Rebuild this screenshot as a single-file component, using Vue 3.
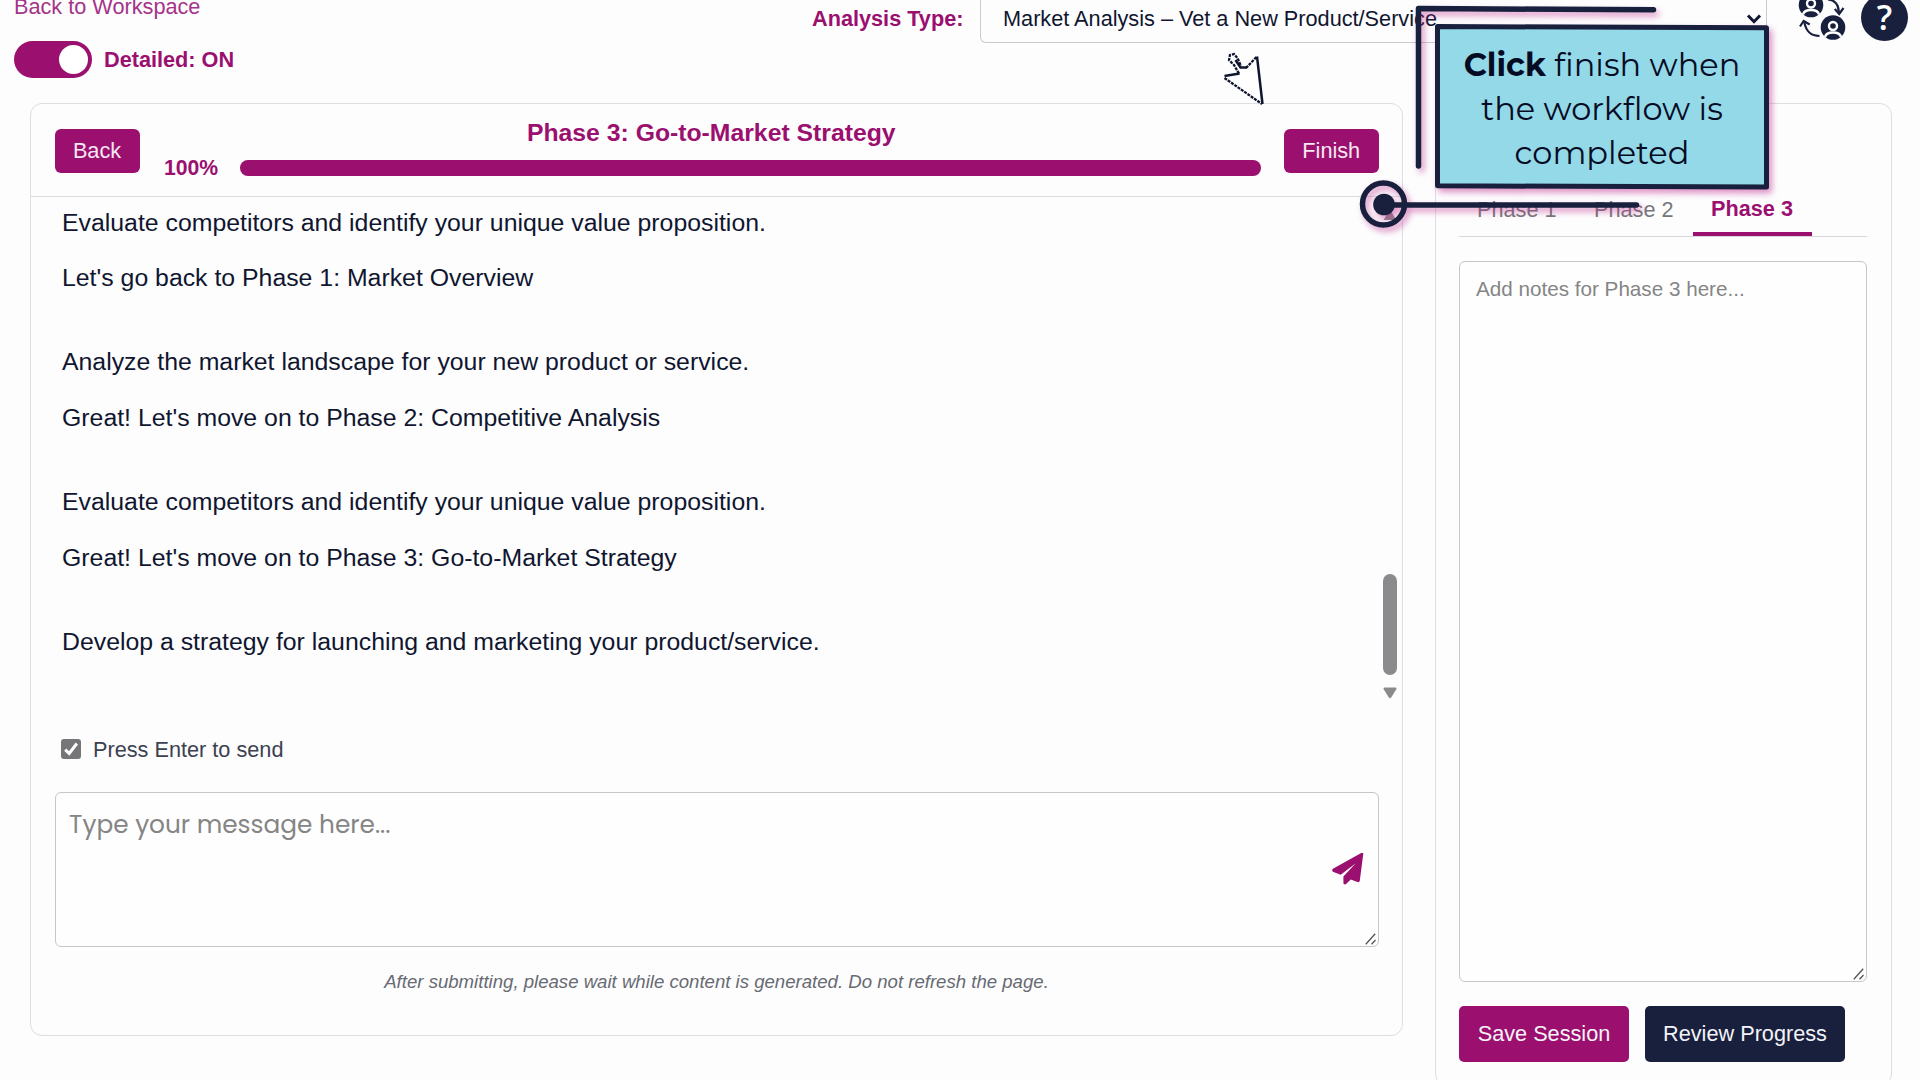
<script setup>
const messages = [
  { text: 'Evaluate competitors and identify your unique value proposition.', last: false },
  { text: "Let's go back to Phase 1: Market Overview", last: true },
  { text: 'Analyze the market landscape for your new product or service.', last: false },
  { text: "Great! Let's move on to Phase 2: Competitive Analysis", last: true },
  { text: 'Evaluate competitors and identify your unique value proposition.', last: false },
  { text: "Great! Let's move on to Phase 3: Go-to-Market Strategy", last: true },
  { text: 'Develop a strategy for launching and marketing your product/service.', last: false },
]
const tabs = ['Phase 1', 'Phase 2', 'Phase 3']
const activeTab = 'Phase 3'
const progress = 100
</script>

<template>
  <div class="page">
    <header class="topbar">
      <div class="workspace">
        <a class="back-link">Back to Workspace</a>
        <div class="toggle-row">
          <span class="toggle"><span class="knob"></span></span>
          <span class="toggle-label">Detailed: ON</span>
        </div>
      </div>
      <div class="analysis">
        <label class="analysis-label">Analysis Type:</label>
        <div class="select">
          <span>Market Analysis – Vet a New Product/Service</span>
          <svg class="chevron" width="16" height="12" viewBox="0 0 16 12"><path d="M2 2.500 8 8.700l6-6.200" fill="none" stroke="#10162f" stroke-width="3" /></svg>
        </div>
      </div>
      <div class="tools">
        <svg width="50" height="49" viewBox="0 0 50 49">
          <g fill="none" stroke="#18203e" stroke-width="2.200">
            <path d="M30 5.500c7 .5 10.500 5 11 13" />
            <path d="M36.800 15l4.400 5 4.300-6" />
            <path d="M21.500 42C12 41.800 8 37 6.300 28" />
            <path d="M2 32.500l3.700-5.500 6 3.500" />
          </g>
          <g v-for="c in [[13, 11], [35, 33.500]]" :key="c[0]" :transform="`translate(${c[0]} ${c[1]})`">
            <circle r="12.300" fill="#18203e" />
            <circle cy="-1.500" r="4" fill="#18203e" stroke="#fff" stroke-width="2.400" />
            <path d="M-8 9.500C-6.500 3.500 6.500 3.500 8 9.500" fill="none" stroke="#fff" stroke-width="2.400" />
          </g>
        </svg>
        <span class="help">?</span>
      </div>
    </header>

    <main class="content">
      <section class="card chat">
        <div class="chat-head">
          <button class="btn">Back</button>
          <div class="phase">
            <h2>Phase 3: Go-to-Market Strategy</h2>
            <div class="progress">
              <span class="percent">{{ progress }}%</span>
              <div class="track"><div class="fill" :style="{ width: progress + '%' }"></div></div>
            </div>
          </div>
          <button class="btn finish">Finish</button>
        </div>

        <div class="messages">
          <p v-for="(m, i) in messages" :key="i" :class="{ last: m.last }">{{ m.text }}</p>
          <span class="thumb"></span>
          <svg class="arrow up" width="14" height="12" viewBox="0 0 14 12"><path d="M7 1 13.500 11h-13z" fill="#8b8b8d" /></svg>
          <svg class="arrow down" width="14" height="12" viewBox="0 0 14 12"><path d="M1.500.5h11q1.500.3.8 1.800L8.200 10.500q-1.200 1.500-2.400 0L.7 2.300Q0 .8 1.500.5z" fill="#8b8b8d" /></svg>
        </div>

        <div class="enter-row">
          <span class="checkbox">
            <svg width="20" height="20" viewBox="0 0 20 20"><path d="M4.200 10.600l4 3.900 7.600-10" fill="none" stroke="#fff" stroke-width="3" /></svg>
          </span>
          <span class="enter-label">Press Enter to send</span>
        </div>

        <div class="composer">
          <textarea placeholder="Type your message here..."></textarea>
          <svg class="send" width="32" height="32" viewBox="0 0 32 32">
            <path d="M31.300.8 27.800 27.500c-.2 1.500-1.300 2-2.400 1.600l-6.600-2.500-4.700 4.500c-1.300 1-2.700.2-2.700-1.300v-6.200L23.500 10.500 8.700 21.800 1.500 19c-1.700-.8-1.700-2.700-.2-3.600L28.800.2c1.400-.8 2.800-.2 2.500.6z" fill="#9b0f6f" />
          </svg>
          <svg class="grip" width="12" height="12" viewBox="0 0 12 12"><path d="M.8 11.200 10.200.8M6.500 11.200 10.500 7" stroke="#555" stroke-width="1.300" /></svg>
        </div>
        <p class="hint">After submitting, please wait while content is generated. Do not refresh the page.</p>
      </section>

      <aside class="card notes">
        <nav class="tabs">
          <span v-for="t in tabs" :key="t" class="tab" :class="{ active: t === activeTab }">{{ t }}</span>
        </nav>
        <div class="notes-box">
          <textarea placeholder="Add notes for Phase 3 here..."></textarea>
          <svg class="grip" width="12" height="12" viewBox="0 0 12 12"><path d="M.8 11.200 10.200.8M6.500 11.200 10.500 7" stroke="#555" stroke-width="1.300" /></svg>
        </div>
        <div class="actions">
          <button class="action save">Save Session</button>
          <button class="action review">Review Progress</button>
        </div>
      </aside>
    </main>

    <svg class="cursor" width="42" height="56" viewBox="0 0 42 56">
      <path d="M39 52 33.500 4 28 11.500 24 16h-5L16.500 12 13 6.500 10.500 3H7L5.500 6 8 11.500 11.500 17l2 5L2 25.500z" fill="#fff" stroke="none" />
      <path d="M39.500 52 34 4.500M1.500 24 16.500 21.500M12.500 8 17.500 15.500h6.500" fill="none" stroke="#10162f" stroke-width="2.500" />
      <path d="M1.500 26 39 52M16 21.500 11 13 6 8 7 3l4-1 3.500 4L18 14M23 16 34 4.500" fill="none" stroke="#10162f" stroke-width="2.300" stroke-dasharray="3 1" />
    </svg>

    <div class="callout">
      <svg class="lines" width="420" height="240" viewBox="0 0 420 240">
        <g fill="none" stroke="#18203e" stroke-linecap="round" stroke-linejoin="round">
          <path d="M58.500 166V8.500L293.500 9.800" stroke-width="5.500" />
          <path d="M33 205H276.500" stroke-width="5.500" />
          <circle cx="23.500" cy="204" r="21" stroke-width="5.500" />
        </g>
        <circle cx="24" cy="204.500" r="10.800" fill="#18203e" />
        <path d="M77.500 26.500 406.500 27.800 406.500 187 77.500 185.800z" fill="#94d9e8" stroke="#18203e" stroke-width="5" stroke-linejoin="round" />
      </svg>
      <div class="callout-text">
        <div><b>Click</b> finish when</div>
        <div>the workflow is</div>
        <div>completed</div>
      </div>
    </div>
  </div>
</template>

<style>
body {
  margin: 0;
  background: #fdfdfe;
}
</style>

<style scoped>
* {
  box-sizing: border-box;
}

.page {
  position: relative;
  width: 1920px;
  height: 1080px;
  overflow: hidden;
  background: #fdfdfe;
  font-family: "Liberation Sans", Arial, sans-serif;
  font-size: 21.7px;
  color: #10162f;
  display: flex;
  flex-direction: column;
}

.topbar {
  display: flex;
  height: 109px;
  margin-top: -6px;
  flex: none;
}

.workspace {
  width: 812px;
  padding-left: 14px;
}

.back-link {
  display: block;
  line-height: 26px;
  color: #a53387;
}

.toggle-row {
  display: flex;
  align-items: center;
  gap: 12px;
  margin-top: 21px;
}

.toggle {
  width: 78px;
  height: 37px;
  border-radius: 19px;
  background: #9b0f6f;
  display: flex;
  align-items: center;
  justify-content: flex-end;
  padding-right: 4px;
}

.knob {
  width: 29px;
  height: 29px;
  border-radius: 50%;
  background: #fff;
}

.toggle-label,
.analysis-label,
.percent {
  font-weight: 700;
  color: #9b0f6f;
}

.analysis {
  display: flex;
  align-items: center;
  width: 955px;
  height: 49px;
}

.analysis-label {
  width: 168px;
}

.select {
  flex: 1;
  height: 49px;
  border: 1.5px solid #c9c9cf;
  border-top: 0;
  border-radius: 0 0 6px 6px;
  display: flex;
  align-items: center;
  justify-content: space-between;
  padding: 1px 4px 0 22px;
}

.tools {
  display: flex;
  align-items: flex-start;
  margin-left: 31px;
}

.help {
  width: 47px;
  height: 47px;
  margin-left: 13px;
  border-radius: 50%;
  background: #18203e;
  color: #fff;
  font: 600 34px/47px "Open Sans", sans-serif;
  text-align: center;
}

.content {
  display: flex;
  align-items: flex-start;
  gap: 32px;
  padding-left: 30px;
}

.card {
  border: 1.5px solid #dedee2;
  border-radius: 12px;
  background: #fdfdfe;
}

.chat {
  width: 1373px;
  height: 933px;
}

.chat-head {
  display: flex;
  align-items: flex-start;
  height: 93px;
  padding: 25px 23.5px 0;
  border-bottom: 1.5px solid #dcdce0;
}

.btn {
  width: 85px;
  height: 43.5px;
  padding: 0;
  border: 0;
  border-radius: 6px;
  background: #9b0f6f;
  color: #f6e9f2;
  font: 21.7px/44px "Liberation Sans", sans-serif;
}

.btn.finish {
  width: 94.5px;
}

.phase {
  flex: 1;
  padding: 0 23.5px 0 24.5px;
  margin-top: -11px;
}

h2 {
  margin: 0;
  padding-right: 2px;
  font-size: 24.75px;
  line-height: 30px;
  text-align: center;
  color: #9b0f6f;
}

.progress {
  display: flex;
  align-items: center;
  margin-top: 9px;
  height: 22px;
}

.percent {
  width: 76px;
  font-size: 21.2px;
  line-height: 22px;
}

.track {
  flex: 1;
  height: 16px;
  border-radius: 8px;
  background: #e6e6ea;
}

.fill {
  height: 16px;
  border-radius: 8px;
  background: #9b0f6f;
}

.messages {
  position: relative;
  height: 509px;
  padding: 11.6px 31px 0;
  font-size: 24.84px;
}

.messages p {
  margin: 0 0 27.9px;
  line-height: 27.95px;
}

.messages p.last {
  margin-bottom: 55.9px;
}

.thumb {
  position: absolute;
  right: 5px;
  top: 377px;
  width: 14px;
  height: 101px;
  border-radius: 7px;
  background: #8b8b8d;
}

.arrow {
  position: absolute;
  right: 5px;
}

.arrow.down {
  top: 490px;
}

.arrow.up {
  top: 12px;
}

.enter-row {
  display: flex;
  align-items: center;
  gap: 12px;
  height: 86px;
  padding-left: 30px;
  color: #3c4150;
}

.enter-label {
  padding-top: 1px;
}

.checkbox {
  width: 20px;
  height: 20px;
  border-radius: 3px;
  background: #767678;
  display: flex;
}

.composer {
  position: relative;
  margin: 0 23.5px;
  height: 155px;
}

textarea {
  display: block;
  width: 100%;
  height: 100%;
  margin: 0;
  resize: none;
  outline: none;
  border: 1.5px solid #c6c6cc;
  border-radius: 6px;
  background: #fefefe;
  overflow: hidden;
}

.composer textarea {
  padding: 15px 13.5px;
  font: 24.8px/34px Poppins, Inter, sans-serif;
}

textarea::placeholder {
  color: #858585;
  opacity: 1;
}

.send {
  position: absolute;
  right: 15px;
  top: 61px;
}

.grip {
  position: absolute;
  right: 2px;
  bottom: 2px;
}

.hint {
  margin: 22px 0 0;
  text-align: center;
  font-size: 18.6px;
  line-height: 26px;
  font-style: italic;
  color: #676a72;
}

.notes {
  width: 457px;
  height: 983px;
  padding: 81px 24px 0 23px;
}

.tabs {
  display: flex;
  height: 52px;
  border-bottom: 1.5px solid #d8d8dc;
}

.tab {
  width: 117px;
  padding-left: 18px;
  line-height: 50px;
  color: #77777b;
}

.tab.active {
  width: 119px;
  height: 51px;
  line-height: 48px;
  font-weight: 700;
  color: #9b0f6f;
  border-bottom: 4px solid #9b0f6f;
}

.notes-box {
  position: relative;
  height: 721px;
  margin-top: 24px;
}

.notes-box textarea {
  padding: 13px 16px;
  font: 20.66px/28px "Liberation Sans", sans-serif;
}

.actions {
  display: flex;
  gap: 16px;
  margin-top: 24px;
}

.action {
  height: 56px;
  padding: 0;
  border: 0;
  border-radius: 5px;
  color: #f4f4f8;
  font: 21.7px/56px "Liberation Sans", sans-serif;
}

.save {
  width: 170px;
  background: #9b0f6f;
}

.review {
  width: 200px;
  background: #18203e;
}

.cursor {
  position: absolute;
  left: 1223px;
  top: 52px;
}

.callout {
  position: absolute;
  left: 1360px;
  top: 0;
  width: 420px;
  height: 240px;
}

.lines {
  position: absolute;
  left: 0;
  top: 0;
  overflow: visible;
  filter: drop-shadow(3px 4px 3px rgba(190, 40, 140, 0.5));
}

.callout-text {
  position: absolute;
  left: 77px;
  top: 42.5px;
  width: 330px;
  text-align: center;
  white-space: nowrap;
  font: 400 32px/44px Montserrat, Inter, sans-serif;
  color: #060b24;
}

.callout-text b {
  font-weight: 700;
}
</style>
